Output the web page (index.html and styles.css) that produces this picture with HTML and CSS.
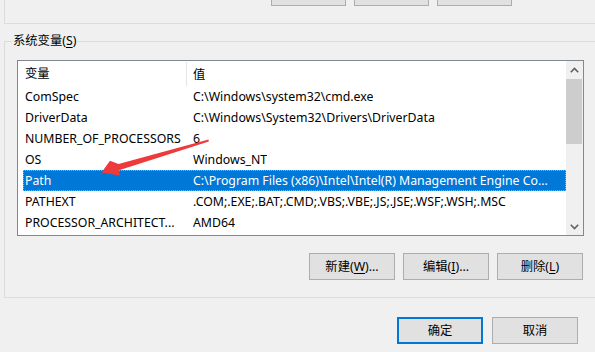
FILE: index.html
```html
<!DOCTYPE html>
<html lang="zh-CN">
<head>
    <meta charset="UTF-8">
    <title>环境变量</title>
    <link rel="stylesheet" href="styles.css">
</head>
<body>
    <div class="user-group">
        <div class="btn-row top-btns">
            <button class="btn small"></button>
            <button class="btn small"></button>
            <button class="btn small"></button>
        </div>
    </div>

    <div class="sys-group">
        <div class="group-title">系统变量(<u>S</u>)</div>
        <div class="listview">
            <div class="list-body">
                <div class="list-head">
                    <span class="hcol name">变量</span>
                    <span class="hcol value">值</span>
                </div>
                <div class="row"><span class="col name">ComSpec</span><span class="col value">C:\Windows\system32\cmd.exe</span></div>
                <div class="row"><span class="col name">DriverData</span><span class="col value">C:\Windows\System32\Drivers\DriverData</span></div>
                <div class="row"><span class="col name">NUMBER_OF_PROCESSORS</span><span class="col value">6</span></div>
                <div class="row"><span class="col name">OS</span><span class="col value">Windows_NT</span></div>
                <div class="row selected"><span class="col name">Path</span><span class="col value">C:\Program Files (x86)\Intel\Intel(R) Management Engine Co...</span></div>
                <div class="row"><span class="col name">PATHEXT</span><span class="col value">.COM;.EXE;.BAT;.CMD;.VBS;.VBE;.JS;.JSE;.WSF;.WSH;.MSC</span></div>
                <div class="row"><span class="col name">PROCESSOR_ARCHITECT...</span><span class="col value">AMD64</span></div>
            </div>
            <div class="scrollbar">
                <div class="sb-arrow">
                    <svg width="9" height="6" viewBox="0 0 9 6"><path d="M0.8 5.2 L4.5 1.5 L8.2 5.2" fill="none" stroke="#606060" stroke-width="1.6"/></svg>
                </div>
                <div class="sb-track">
                    <div class="sb-thumb"></div>
                </div>
                <div class="sb-arrow">
                    <svg width="9" height="6" viewBox="0 0 9 6"><path d="M0.8 0.8 L4.5 4.5 L8.2 0.8" fill="none" stroke="#606060" stroke-width="1.6"/></svg>
                </div>
            </div>
        </div>
        <div class="btn-row list-btns">
            <button class="btn">新建(<u>W</u>)...</button>
            <button class="btn">编辑(<u>I</u>)...</button>
            <button class="btn">删除(<u>L</u>)</button>
        </div>
    </div>

    <div class="btn-row dialog-btns">
        <button class="btn default">确定</button>
        <button class="btn">取消</button>
    </div>

    <!-- red annotation arrow pointing at Path -->
    <svg class="annotation" width="595" height="352" viewBox="0 0 595 352">
        <polygon points="101.5,172.5 110,160.8 118.5,164 208.5,139.6 208.8,141.4 119,170.2 119.8,175.6" fill="#ee3a3a"/>
    </svg>
</body>
</html>
```

FILE: styles.css
```css
body {
    margin: 0;
    width: 595px;
    height: 352px;
    overflow: hidden;
    background-color: #f0f0f0;
    font-family: "Noto Sans", "Noto Sans CJK SC", sans-serif;
    font-size: 12.3px;
    color: #000;
    position: relative;
}

u {
    text-decoration: underline;
    text-underline-offset: 2px;
}

.btn-row {
    display: flex;
}

.btn {
    height: 27px;
    width: 86px;
    padding: 0;
    border: 1px solid #adadad;
    background-color: #e1e1e1;
    font-family: "Noto Sans", "Noto Sans CJK SC", sans-serif;
    font-size: 12.3px;
    color: #000;
    line-height: 25px;
}

.btn.small {
    width: 75px;
}

.btn.default {
    border: 2px solid #0078d7;
    line-height: 23px;
}

/* upper group box, mostly scrolled off */
.user-group {
    display: flow-root;
    margin-left: 4px;
    height: 23px;
    border-left: 1px solid #dcdcdc;
    border-bottom: 1px solid #dcdcdc;
}

.top-btns {
    margin-top: -21px;
    padding-left: 266px;
    gap: 8px;
}

/* system variables group */
.sys-group {
    margin: 17px 0 0 4px;
    height: 255px;
    border: 1px solid #dcdcdc;
    border-right: none;
}

.group-title {
    display: table;
    margin: -9px 0 0 7px;
    padding: 0 1px;
    line-height: 16px;
    background-color: #f0f0f0;
}

.listview {
    display: flex;
    margin: 11px 0 0 12px;
    width: 565px;
    height: 174px;
    border: 1px solid #828790;
    background-color: #fff;
}

.list-body {
    flex: 1;
    overflow: hidden;
}

.list-head {
    display: flex;
    height: 25px;
    align-items: center;
}

.hcol.name {
    width: 161px;
    padding-left: 7px;
    height: 24px;
    line-height: 24px;
    border-right: 1px solid #e5e5e5;
}

.hcol.value {
    padding-left: 6px;
}

.row {
    display: flex;
    height: 21px;
    line-height: 21px;
    margin-left: 5px;
    white-space: nowrap;
}

.col.name {
    width: 168px;
    padding-left: 2px;
    overflow: hidden;
}

.col.value {
    overflow: hidden;
}

.row.selected {
    background-color: #0078d7;
    color: #fff;
    outline: 1px dotted #f59a3a;
    outline-offset: -1px;
}

/* vertical scrollbar */
.scrollbar {
    width: 17px;
    display: flex;
    flex-direction: column;
    background-color: #f0f0f0;
}

.sb-arrow {
    height: 17px;
    display: flex;
    align-items: center;
    justify-content: center;
}

.sb-track {
    flex: 1;
    padding: 1px 1px 0 0;
}

.sb-thumb {
    height: 65px;
    background-color: #cdcdcd;
}

.list-btns {
    justify-content: flex-end;
    gap: 8px;
    margin: 17px 12px 0 0;
}

.dialog-btns {
    justify-content: flex-end;
    gap: 9px;
    margin: 19px 17px 0 0;
}

.annotation {
    position: absolute;
    left: 0;
    top: 0;
    pointer-events: none;
}
```
